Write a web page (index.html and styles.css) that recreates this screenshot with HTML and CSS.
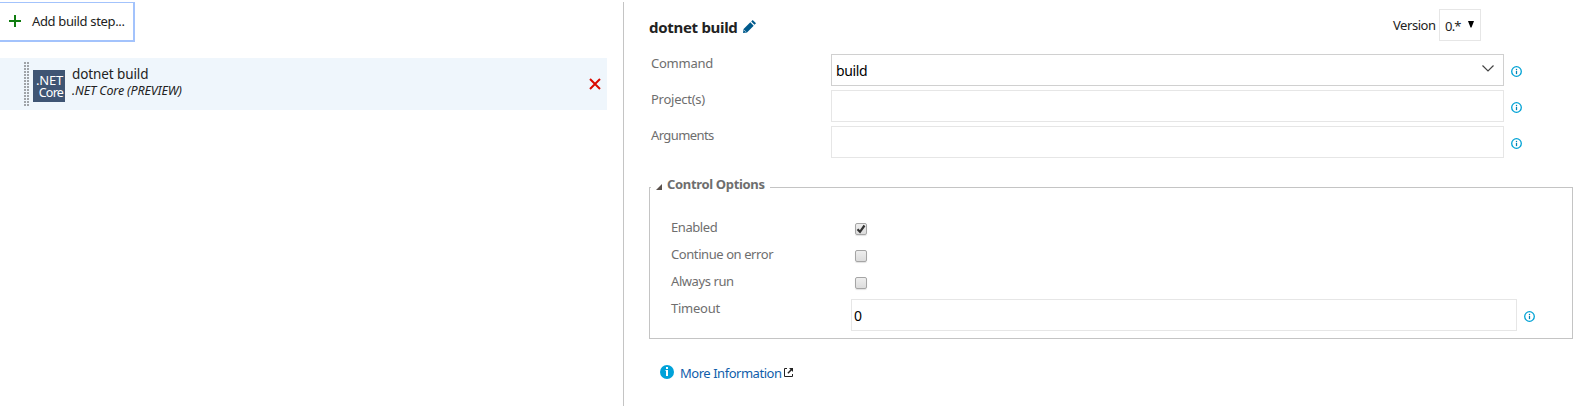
FILE: index.html
```html
<!DOCTYPE html>
<html lang="en">
<head>
<meta charset="utf-8">
<title>Build definition</title>
<link rel="stylesheet" href="styles.css">
</head>
<body>
<svg class="defs" width="0" height="0">
  <symbol id="info" viewBox="0 0 11 11"><circle cx="5.5" cy="5.5" r="4.8" fill="none" stroke="#00a2d5" stroke-width="1.3"/><path d="M5 5h1v3H5zM5 3h1v1H5z" fill="#0083b5" stroke="#0083b5" stroke-width=".25"/></symbol>
</svg>
<div class="page">
  <aside class="steps">
    <button class="add">
      <svg class="plus" width="12" height="12" viewBox="0 0 12 12"><path d="M6 0v12M0 6h12" stroke="#107c10" stroke-width="2"/></svg>
      <span class="add-text">Add build step...</span>
    </button>
    <div class="step">
      <svg class="grip" width="5" height="44"><defs><pattern id="dots" width="3" height="3" patternUnits="userSpaceOnUse"><path d="M0 0h2v2H0z" fill="#a0a4a8"/></pattern></defs><path d="M0 0h5v44H0z" fill="url(#dots)"/></svg>
      <div class="logo"><span class="net">.NET</span><span class="core">Core</span></div>
      <div class="names"><div class="name">dotnet build</div><div class="kind">.NET Core (PREVIEW)</div></div>
      <svg class="remove" width="12" height="12" viewBox="0 0 12 12"><path d="M1 1l10 10M11 1L1 11" stroke="#da0a00" stroke-width="2"/></svg>
    </div>
  </aside>
  <main class="details">
    <header class="head">
      <h1 class="title">dotnet build</h1>
      <svg class="pencil" width="13" height="13" viewBox="0 0 13 13"><path d="M0 13l.6-4L7.3 2.3l3.4 3.4L4 12.400z M8.200 1.500L9.700 0l3.300 3.300-1.500 1.500z" fill="#005a8c"/><path d="M1.300 10.200l1.500 1.500" stroke="#fff" stroke-width=".8"/></svg>
      <span class="version">Version</span>
      <div class="version-select"><span>0.*</span><svg width="6" height="7" viewBox="0 0 6 7"><path d="M0 0h6L3.500 6.500h-1z" fill="#000"/></svg></div>
    </header>
    <div class="fields">
      <div class="field"><label class="label">Command</label><div class="box combo"><span>build</span><svg width="12" height="7" viewBox="0 0 12 7"><path d="M.5.5L6 6l5.500-5.500" fill="none" stroke="#444" stroke-width="1.200"/></svg></div><svg class="info" width="11" height="11"><use href="#info"/></svg></div>
      <div class="field"><label class="label">Project(s)</label><div class="box"></div><svg class="info" width="11" height="11"><use href="#info"/></svg></div>
      <div class="field"><label class="label tight">Arguments</label><div class="box"></div><svg class="info" width="11" height="11"><use href="#info"/></svg></div>
    </div>
    <fieldset class="options">
      <legend class="legend"><svg width="6" height="6" viewBox="0 0 6 6"><path d="M6 0v6H0z" fill="#5a514c"/></svg><span>Control Options</span></legend>
      <div class="option"><label class="label snug">Enabled</label><span class="check"><svg width="10" height="10" viewBox="0 0 10 10"><path d="M1.500 5.300L4 7.800 8.500 1.500" fill="none" stroke="#333" stroke-width="2.200"/></svg></span></div>
      <div class="option"><label class="label snug">Continue on error</label><span class="check"></span></div>
      <div class="option"><label class="label snug">Always run</label><span class="check"></span></div>
      <div class="timeout"><label class="label">Timeout</label><div class="box"><span>0</span></div><svg class="info" width="11" height="11"><use href="#info"/></svg></div>
    </fieldset>
    <a class="more">
      <svg class="about" width="14" height="14" viewBox="0 0 14 14"><circle cx="7" cy="7" r="7" fill="#00a2d9"/><path d="M6 2h2v2H6zM5.500 5H8v6H6V6h-.5z" fill="#fff"/></svg>
      <span>More Information</span>
      <svg class="external" width="9" height="9" viewBox="0 0 9 9"><path d="M3 .500H.500v8h8V6" fill="none" stroke="#222"/><path d="M5 0h4v4L7.600 2.600 4.400 5.800l-1-1L6.500 1.500z" fill="#222"/></svg>
    </a>
  </main>
</div>
</body>
</html>
```
FILE: styles.css
```css
* { box-sizing: border-box; }
body { margin: 0; background: #fff; color: #222; font: 13px/18px "Noto Sans", sans-serif; overflow: hidden; }
svg { display: block; flex: none; }
.defs { position: absolute; }
.page { display: flex; height: 406px; padding-top: 2px; white-space: nowrap; }
.steps { width: 623px; }
.add { display: flex; align-items: center; width: 135px; height: 40px; padding: 0 0 0 9px; border: solid #a3c3fc; border-width: 1px 2px 2px 0; background: #fff; color: #222; font: inherit; }
.plus { margin-top: -1px; }
.add-text { margin: -2px 0 0 11px; letter-spacing: -.35px; }
.step { display: flex; width: 607px; height: 52px; margin-top: 16px; padding: 4px 0 0 24px; background: #eff6fc; }
.logo { display: flex; flex-direction: column; align-items: flex-end; width: 32px; height: 32px; margin: 8px 0 0 4px; padding: 5px 2px 0 0; background: #3f5574; color: #fff; font-size: 13px; line-height: 11.5px; }
.net { letter-spacing: -.2px; }
.core { font-size: 12.5px; letter-spacing: -.8px; }
.names { width: 517px; margin-left: 7px; padding-top: 3px; }
.name { line-height: 19px; font-size: 13.500px; letter-spacing: -.1px; }
.kind { font-size: 12.500px; line-height: 14px; font-style: italic; letter-spacing: -.15px; }
.remove { margin: 16px 0 0 0; }
.details { display: flex; flex-direction: column; width: 960px; padding-left: 25px; border-left: 1px solid #c4c4c4; }
.head { display: flex; height: 52px; }
.title { width: 90px; margin: 15px 0 0; font-size: 15px; line-height: 20px; letter-spacing: -.3px; font-weight: 700; }
.pencil { margin: 18px 0 0 4px; }
.version { width: 42px; margin: 14px 0 0 637px; letter-spacing: -.45px; }
.version-select { display: flex; align-items: center; width: 42px; height: 32px; margin: 7px 0 0 4px; padding-left: 5px; border: 1px solid #e6e6e6; }
.version-select span { width: 23px; padding-top: 2px; letter-spacing: -.8px; }
.version-select svg { margin-bottom: 1px; }
.fields { display: flex; flex-direction: column; gap: 4px; }
.field { display: grid; grid-template-columns: 180px 673px 18px; height: 32px; padding-left: 2px; }
.label { color: #6e6e6e; letter-spacing: -.25px; }
.label.snug { letter-spacing: -.42px; }
.label.tight { letter-spacing: -.6px; }
.box { display: flex; align-items: center; justify-content: space-between; height: 32px; border: 1px solid #e6e6e6; color: #000; font-size: 14px; }
.combo { padding: 0 9px 0 4px; border-color: #d0d0d0; }
.combo span { padding-top: 2px; letter-spacing: -.35px; }
.combo svg { margin-bottom: 3px; }
.info { margin: 12px 0 0 7px; }
.options { width: 924px; height: 164px; margin: 17px 0 0; padding: 19px 0 0 21px; border: 1px solid #c4c4c4; min-width: 0; }
.legend { display: flex; align-items: center; width: 119px; height: 24px; margin-left: -20px; padding: 0 0 6px 5px; color: #6e6e6e; font-weight: 700; }
.legend span { margin-left: 5px; letter-spacing: -.33px; }
.legend svg { margin-top: 5px; }
.option { display: grid; grid-template-columns: 184px 12px; height: 27px; }
.check { display: flex; width: 12px; height: 12px; margin-top: 5px; border: 1px solid #a5a5a5; border-radius: 2px; background: linear-gradient(#eee, #dcdcdc); box-shadow: 0 1px 1px #e2e2e2; }
.timeout { display: grid; grid-template-columns: 180px 666px 18px; }
.timeout .box { padding: 2px 0 0 2px; }
.more { display: flex; width: 150px; height: 18px; margin: 24px 0 0 11px; align-items: center; color: #105eab; }
.about { margin-top: -1px; }
.more span { width: 101px; margin: 1px 0 0 6px; letter-spacing: -.47px; }
.external { margin-left: 3px; }
```
